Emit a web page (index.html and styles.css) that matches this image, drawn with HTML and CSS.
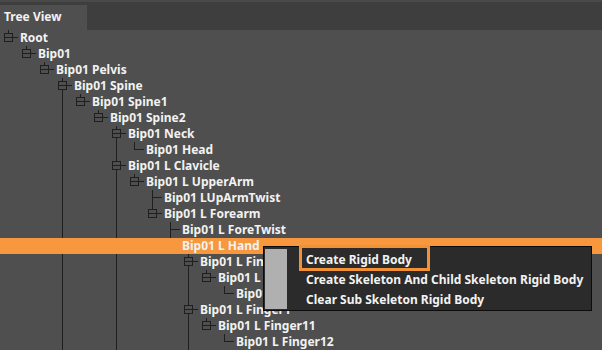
FILE: index.html
```html
<!DOCTYPE html>
<html lang="en">
<head>
    <meta charset="UTF-8">
    <title>Tree View</title>
    <link rel="stylesheet" href="styles.css">
</head>
<body>

    <div class="panel">
        <div class="tabbar">
            <div class="tab">Tree View</div>
        </div>

        <div class="tree">
            <div class="row"><span class="c box"></span><span class="name">Root</span></div>
            <div class="row"><span class="c"></span><span class="c box"></span><span class="name">Bip01</span></div>
            <div class="row"><span class="c"></span><span class="c"></span><span class="c box"></span><span class="name">Bip01 Pelvis</span></div>
            <div class="row"><span class="c"></span><span class="c"></span><span class="c"></span><span class="c box dn"></span><span class="name">Bip01 Spine</span></div>
            <div class="row"><span class="c"></span><span class="c"></span><span class="c"></span><span class="c v"></span><span class="c box"></span><span class="name">Bip01 Spine1</span></div>
            <div class="row"><span class="c"></span><span class="c"></span><span class="c"></span><span class="c v"></span><span class="c"></span><span class="c box"></span><span class="name">Bip01 Spine2</span></div>
            <div class="row"><span class="c"></span><span class="c"></span><span class="c"></span><span class="c v"></span><span class="c"></span><span class="c"></span><span class="c box dn"></span><span class="name">Bip01 Neck</span></div>
            <div class="row"><span class="c"></span><span class="c"></span><span class="c"></span><span class="c v"></span><span class="c"></span><span class="c"></span><span class="c v"></span><span class="c elb"></span><span class="name">Bip01 Head</span></div>
            <div class="row"><span class="c"></span><span class="c"></span><span class="c"></span><span class="c v"></span><span class="c"></span><span class="c"></span><span class="c box dn"></span><span class="name">Bip01 L Clavicle</span></div>
            <div class="row"><span class="c"></span><span class="c"></span><span class="c"></span><span class="c v"></span><span class="c"></span><span class="c"></span><span class="c v"></span><span class="c box"></span><span class="name">Bip01 L UpperArm</span></div>
            <div class="row"><span class="c"></span><span class="c"></span><span class="c"></span><span class="c v"></span><span class="c"></span><span class="c"></span><span class="c v"></span><span class="c"></span><span class="c tee"></span><span class="name">Bip01 LUpArmTwist</span></div>
            <div class="row"><span class="c"></span><span class="c"></span><span class="c"></span><span class="c v"></span><span class="c"></span><span class="c"></span><span class="c v"></span><span class="c"></span><span class="c box"></span><span class="name">Bip01 L Forearm</span></div>
            <div class="row"><span class="c"></span><span class="c"></span><span class="c"></span><span class="c v"></span><span class="c"></span><span class="c"></span><span class="c v"></span><span class="c"></span><span class="c"></span><span class="c tee"></span><span class="name">Bip01 L ForeTwist</span></div>
            <div class="row selected"><span class="c"></span><span class="c"></span><span class="c"></span><span class="c"></span><span class="c"></span><span class="c"></span><span class="c"></span><span class="c"></span><span class="c"></span><span class="c"></span><span class="name">Bip01 L Hand</span></div>
            <div class="row"><span class="c"></span><span class="c"></span><span class="c"></span><span class="c v"></span><span class="c"></span><span class="c"></span><span class="c v"></span><span class="c"></span><span class="c"></span><span class="c"></span><span class="c box dn"></span><span class="name">Bip01 L Finger0</span></div>
            <div class="row"><span class="c"></span><span class="c"></span><span class="c"></span><span class="c v"></span><span class="c"></span><span class="c"></span><span class="c v"></span><span class="c"></span><span class="c"></span><span class="c"></span><span class="c v"></span><span class="c box"></span><span class="name">Bip01 L Finger01</span></div>
            <div class="row"><span class="c"></span><span class="c"></span><span class="c"></span><span class="c v"></span><span class="c"></span><span class="c"></span><span class="c v"></span><span class="c"></span><span class="c"></span><span class="c"></span><span class="c v"></span><span class="c"></span><span class="c elb"></span><span class="name">Bip01 L Finger02</span></div>
            <div class="row"><span class="c"></span><span class="c"></span><span class="c"></span><span class="c v"></span><span class="c"></span><span class="c"></span><span class="c v"></span><span class="c"></span><span class="c"></span><span class="c"></span><span class="c box dn"></span><span class="name">Bip01 L Finger1</span></div>
            <div class="row"><span class="c"></span><span class="c"></span><span class="c"></span><span class="c v"></span><span class="c"></span><span class="c"></span><span class="c v"></span><span class="c"></span><span class="c"></span><span class="c"></span><span class="c v"></span><span class="c box"></span><span class="name">Bip01 L Finger11</span></div>
            <div class="row"><span class="c"></span><span class="c"></span><span class="c"></span><span class="c v"></span><span class="c"></span><span class="c"></span><span class="c v"></span><span class="c"></span><span class="c"></span><span class="c"></span><span class="c v"></span><span class="c"></span><span class="c elb"></span><span class="name">Bip01 L Finger12</span></div>
        </div>

        <!-- menu opened on the selected row -->
        <div class="menu">
            <div class="menu-icons"></div>
            <ul class="menu-list">
                <li class="active">Create Rigid Body</li>
                <li>Create Skeleton And Child Skeleton Rigid Body</li>
                <li>Clear Sub Skeleton Rigid Body</li>
            </ul>
        </div>
    </div>

</body>
</html>
```

FILE: styles.css
```css
body {
    margin: 0;
    background-color: #4f4f4f;
    font-family: 'Noto Sans', 'DejaVu Sans', sans-serif;
    font-size: 12px;
    font-weight: 700;
    color: #f2f2f2;
    overflow: hidden;
}

.panel {
    position: relative;
    width: 602px;
    height: 350px;
    background-color: #4f4f4f;
    overflow: hidden;
}

.tabbar {
    height: 28px;
    border-top: 2px solid #4a4a4a;
    background-color: #3e3e3e;
    display: flex;
    align-items: flex-end;
}

.tab {
    width: 87px;
    height: 25px;
    background-color: #4f4f4f;
    padding-left: 4px;
    line-height: 24px;
    box-sizing: border-box;
}

.tree {
    display: flex;
    flex-direction: column;
}

.row {
    display: flex;
    height: 16px;
    line-height: 16px;
    white-space: nowrap;
}

.row.selected {
    background-color: #f7983f;
}

.name {
    padding-left: 2px;
}

/* tree guide cells, 18px per level, line on column 8 */
.c {
    --ln: #1f1f1f;
    flex: none;
    width: 18px;
    height: 16px;
    position: relative;
}

.c.v {
    background: linear-gradient(var(--ln), var(--ln)) 8px 0 / 1px 16px no-repeat;
}

.c.tee {
    background:
        linear-gradient(var(--ln), var(--ln)) 8px 0 / 1px 16px no-repeat,
        linear-gradient(var(--ln), var(--ln)) 8px 7px / 10px 1px no-repeat;
}

.c.elb {
    background:
        linear-gradient(var(--ln), var(--ln)) 8px 0 / 1px 8px no-repeat,
        linear-gradient(var(--ln), var(--ln)) 8px 7px / 10px 1px no-repeat;
}

.c.box {
    background:
        linear-gradient(var(--ln), var(--ln)) 8px 0 / 1px 3px no-repeat,
        linear-gradient(var(--ln), var(--ln)) 4px 7px / 14px 1px no-repeat;
}

.c.box.dn {
    background:
        linear-gradient(var(--ln), var(--ln)) 8px 0 / 1px 3px no-repeat,
        linear-gradient(var(--ln), var(--ln)) 8px 12px / 1px 4px no-repeat,
        linear-gradient(var(--ln), var(--ln)) 4px 7px / 14px 1px no-repeat;
}

.c.box::before {
    content: '';
    position: absolute;
    left: 4px;
    top: 3px;
    width: 9px;
    height: 9px;
    border: 1px solid var(--ln);
    box-sizing: border-box;
}

/* context menu */
.menu {
    position: absolute;
    left: 263px;
    top: 246px;
    width: 329px;
    height: 65px;
    border: 1px solid #0c0c0c;
    background-color: #2b2b2b;
    box-sizing: border-box;
    display: flex;
    padding: 2px 0 0 1px;
}

.menu-icons {
    width: 22px;
    height: 60px;
    background-color: #b0b0b0;
}

.menu-list {
    list-style: none;
    margin: 0;
    padding: 1px 0 0 19px;
}

.menu-list li {
    height: 20px;
    line-height: 20px;
    position: relative;
}

.menu-list li.active::after {
    content: '';
    position: absolute;
    left: -7px;
    top: -5px;
    width: 131px;
    height: 26px;
    border: 3px solid #f39234;
    box-sizing: border-box;
}
```
